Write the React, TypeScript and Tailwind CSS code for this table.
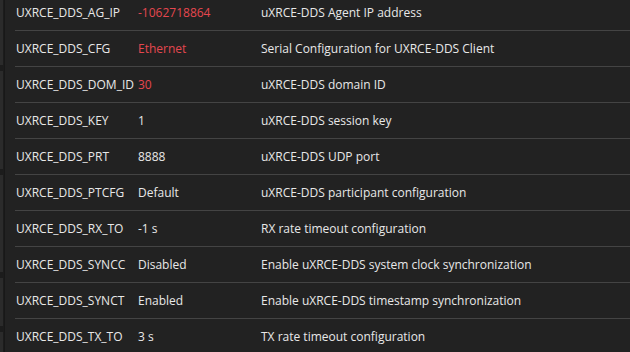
const params = [
  { name: 'UXRCE_DDS_AG_IP', value: '-1062718864', desc: 'uXRCE-DDS Agent IP address', changed: true },
  { name: 'UXRCE_DDS_CFG', value: 'Ethernet', desc: 'Serial Configuration for UXRCE-DDS Client', changed: true },
  { name: 'UXRCE_DDS_DOM_ID', value: '30', desc: 'uXRCE-DDS domain ID', changed: true },
  { name: 'UXRCE_DDS_KEY', value: '1', desc: 'uXRCE-DDS session key' },
  { name: 'UXRCE_DDS_PRT', value: '8888', desc: 'uXRCE-DDS UDP port' },
  { name: 'UXRCE_DDS_PTCFG', value: 'Default', desc: 'uXRCE-DDS participant configuration' },
  { name: 'UXRCE_DDS_RX_TO', value: '-1 s', desc: 'RX rate timeout configuration' },
  { name: 'UXRCE_DDS_SYNCC', value: 'Disabled', desc: 'Enable uXRCE-DDS system clock synchronization' },
  { name: 'UXRCE_DDS_SYNCT', value: 'Enabled', desc: 'Enable uXRCE-DDS timestamp synchronization' },
  { name: 'UXRCE_DDS_TX_TO', value: '3 s', desc: 'TX rate timeout configuration' },
];

// blocks of the group list peeking in on the left
const sideBlocks = ['h-[65px]', 'h-[98px]', 'h-[97px]', 'h-[48px]', 'h-[30px]'];

export default function App() {
  return (
    <div className="flex h-[352px] w-[630px] overflow-hidden bg-[#222222] font-['Open_Sans',sans-serif] text-[12px] text-[#e8e8e8]">
      <div className="flex w-[4px] shrink-0 flex-col gap-[6px] bg-[#1c1c1c]">
        {sideBlocks.map((h, i) => (
          <div key={i} className={`${h} w-[3px] shrink-0 bg-[#2b2b2b]`} />
        ))}
      </div>
      <div className="w-[1px] shrink-0 bg-[#181818]" />
      <div className="min-w-0 flex-1 pl-[10px]">
        <div className="-mt-[5px]">
          {params.map((p) => (
            <div key={p.name} className="flex h-[36px] items-center border-b border-[#444444] whitespace-nowrap">
              <div className="w-[123px] shrink-0 pl-[1px]">{p.name}</div>
              <div className={`w-[123px] shrink-0 ${p.changed ? 'text-[#e5474f]' : ''}`}>{p.value}</div>
              <div>{p.desc}</div>
            </div>
          ))}
        </div>
      </div>
    </div>
  );
}
